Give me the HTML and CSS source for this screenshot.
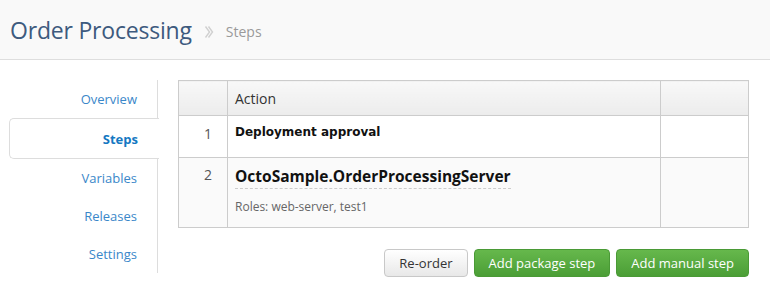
FILE: index.html
```html
<html>
	<head>
		<title>Order Processing - Steps</title>
		<meta name="viewport" content="width=device-width, initial-scale=1">
		<link rel="stylesheet" href="styles.css">
	</head>
	<body>
		<div class="header">
			<h1>Order Processing</h1>
			<svg class="crumb" width="10" height="14" viewBox="0 0 10 14">
				<path d="M1.5 1.5 L5.5 7 L1.5 12.5 M4.5 1.5 L8.5 7 L4.5 12.5" fill="none" stroke="#d0d0d0" stroke-width="1.4"/>
			</svg>
			<span class="crumbText">Steps</span>
		</div>
		<div class="content">
			<ul class="nav">
				<li><a href="#">Overview</a></li>
				<li class="active"><a href="#">Steps</a></li>
				<li><a href="#">Variables</a></li>
				<li><a href="#">Releases</a></li>
				<li><a href="#">Settings</a></li>
			</ul>
			<div class="main">
				<table class="steps">
					<tr class="head">
						<th class="num"></th>
						<th>Action</th>
						<th class="extra"></th>
					</tr>
					<tr class="step">
						<td class="num">1</td>
						<td><strong class="manual">Deployment approval</strong></td>
						<td></td>
					</tr>
					<tr class="step hover">
						<td class="num">2</td>
						<td>
							<span class="pkg">OctoSample.OrderProcessingServer</span>
							<div class="roles">Roles: web-server, test1</div>
						</td>
						<td></td>
					</tr>
				</table>
				<div class="actions">
					<button class="button">Re-order</button>
					<button class="button buttonGreen">Add package step</button>
					<button class="button buttonGreen">Add manual step</button>
				</div>
			</div>
		</div>
	</body>
</html>
```

FILE: styles.css
```css
html{font-family: "Open Sans", "Noto Sans", sans-serif;}
body{margin: 0; background: #fff; color: #333;}
.header{display: flex; align-items: center; height: 59px; padding-left: 10px; background: #f9f9f9; border-bottom: 1px solid #dedede;}
.header h1{margin: 0; font-size: 23px; font-weight: normal; color: #3d5a7e; letter-spacing: -0.2px;}
.crumb{margin: 4px 0 0 12px;}
.crumbText{margin: 4px 0 0 12px; font-size: 14px; color: #9a9a9a;}
.content{display: flex; padding: 20px 21px 0 9px;}
.nav{list-style: none; margin: 0; padding: 0; width: 149px; flex-shrink: 0;}
.nav li{height: 38px; border-right: 1px solid #ddd; display: flex; align-items: center; justify-content: flex-end; padding-right: 20px;}
.nav a{font-size: 13px; color: #3a87c9; text-decoration: none;}
.nav li.active{height: 39px; border: 1px solid #ddd; border-right: none; border-radius: 5px 0 0 5px; background: #fff; padding-right: 21px; margin-right: -1px;}
.nav li.active a{font-weight: bold; color: #1478c2;}
.main{flex: 1; margin-left: 20px;}
.steps{width: 100%; border-collapse: collapse; border: 1px solid #ccc; font-size: 13px; table-layout: fixed;}
.steps tr.head{height: 35px;}
.steps th{text-align: left; font-weight: normal; font-size: 14px; color: #333; padding: 0 7px; background: linear-gradient(#f8f8f8, #ececec); border: 1px solid #ccc;}
.steps td{border: 1px solid #ccc; vertical-align: top; padding: 8px 7px;}
.steps .num{width: 26px; text-align: right; padding-right: 15px; font-size: 14px; color: #555;}
.steps .extra{width: 73px;}
.steps tr.step{height: 42px;}
.steps tr.hover{height: 70px;}
.steps tr.hover td{background: #fafafa; padding-top: 7px;}
.manual{font-family: "DejaVu Sans", sans-serif; font-size: 12px; color: #111; display: block; margin-top: 1px;}
.pkg{font-size: 15.5px; font-weight: bold; color: #111; border-bottom: 1px dashed #ccc; padding-bottom: 1px;}
.roles{margin-top: 11px; font-size: 12px; color: #666;}
.actions{display: flex; justify-content: flex-end; gap: 6px; margin-top: 21px;}
.button{font-family: inherit; font-size: 13px; height: 28px; padding: 0 14px; border: 1px solid #c8c8c8; border-radius: 4px; background: linear-gradient(#ffffff, #e8e8e8); color: #333; cursor: pointer;}
.buttonGreen{color: #fff; border-color: #4a9a36; background: linear-gradient(#66b84c, #4b9e36);}
```
